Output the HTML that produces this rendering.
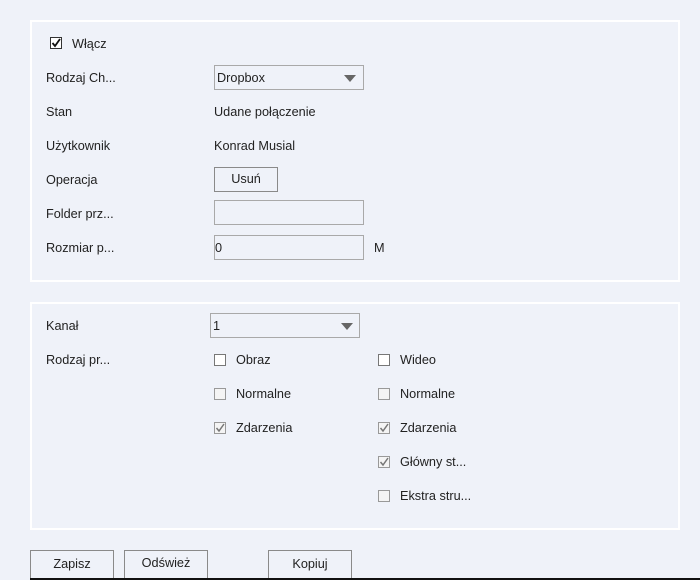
<!DOCTYPE html>
<html><head><style>
body{margin:0;width:700px;height:580px;background:#eff2f9;font-family:"Liberation Sans",sans-serif;font-size:12.7px;color:#222;position:relative;overflow:hidden}
.p{position:absolute;border:2px solid #fff;box-sizing:border-box}
.t{position:absolute;line-height:14px;white-space:nowrap}
.box{position:absolute;border:1px solid #a9a9a9;box-sizing:border-box;background:#eff2f9}
.cb{position:absolute;width:12px;height:12px;border:1px solid #777;box-sizing:border-box;background:#fff}
.cb.g{background:#f4f4f4;border-color:#999}
.arr{position:absolute;width:0;height:0;border-left:6px solid transparent;border-right:6px solid transparent;border-top:7px solid #666}
.btn{position:absolute;border:1px solid #8a8a8a;box-sizing:border-box;text-align:center;line-height:26px;background:#eff2f9}
</style></head><body>
<div class="p" style="left:30px;top:20px;width:650px;height:262px"></div>
<div class="p" style="left:30px;top:302px;width:650px;height:228px"></div>

<div class="cb" style="left:50px;top:37px;border-color:#333"><svg width="10" height="10" style="position:absolute;left:0;top:0"><path d="M1.5 5 L4 8 L9 1" stroke="#111" stroke-width="1.8" fill="none"/></svg></div>
<div class="t" style="left:72px;top:37px">Włącz</div>

<div class="t" style="left:46px;top:71px">Rodzaj Ch...</div>
<div class="box" style="left:214px;top:65px;width:150px;height:25px"></div>
<div class="t" style="left:217px;top:71px">Dropbox</div>
<div class="arr" style="left:344px;top:75px"></div>

<div class="t" style="left:46px;top:105px">Stan</div>
<div class="t" style="left:214px;top:105px">Udane połączenie</div>
<div class="t" style="left:46px;top:139px">Użytkownik</div>
<div class="t" style="left:214px;top:139px">Konrad Musial</div>
<div class="t" style="left:46px;top:173px">Operacja</div>
<div class="btn" style="left:214px;top:167px;width:64px;height:25px;line-height:23px">Usuń</div>
<div class="t" style="left:46px;top:207px">Folder prz...</div>
<div class="box" style="left:214px;top:200px;width:150px;height:25px"></div>
<div class="t" style="left:46px;top:241px">Rozmiar p...</div>
<div class="box" style="left:214px;top:235px;width:150px;height:25px"></div>
<div class="t" style="left:215px;top:241px">0</div>
<div class="t" style="left:374px;top:241px">M</div>

<div class="t" style="left:46px;top:319px">Kanał</div>
<div class="box" style="left:210px;top:313px;width:150px;height:25px"></div>
<div class="t" style="left:213px;top:319px">1</div>
<div class="arr" style="left:341px;top:323px"></div>

<div class="t" style="left:46px;top:353px">Rodzaj pr...</div>
<div class="cb" style="left:214px;top:354px"></div><div class="t" style="left:236px;top:353px">Obraz</div>
<div class="cb" style="left:378px;top:354px"></div><div class="t" style="left:400px;top:353px">Wideo</div>
<div class="cb g" style="left:214px;top:388px"></div><div class="t" style="left:236px;top:387px">Normalne</div>
<div class="cb g" style="left:378px;top:388px"></div><div class="t" style="left:400px;top:387px">Normalne</div>
<div class="cb g" style="left:214px;top:422px"><svg width="10" height="10" style="position:absolute;left:0;top:0"><path d="M1.5 5 L4 8 L9 1" stroke="#777" stroke-width="1.5" fill="none"/></svg></div><div class="t" style="left:236px;top:421px">Zdarzenia</div>
<div class="cb g" style="left:378px;top:422px"><svg width="10" height="10" style="position:absolute;left:0;top:0"><path d="M1.5 5 L4 8 L9 1" stroke="#777" stroke-width="1.5" fill="none"/></svg></div><div class="t" style="left:400px;top:421px">Zdarzenia</div>
<div class="cb g" style="left:378px;top:456px"><svg width="10" height="10" style="position:absolute;left:0;top:0"><path d="M1.5 5 L4 8 L9 1" stroke="#777" stroke-width="1.5" fill="none"/></svg></div><div class="t" style="left:400px;top:455px">Główny st...</div>
<div class="cb g" style="left:378px;top:490px"></div><div class="t" style="left:400px;top:489px">Ekstra stru...</div>

<div class="btn" style="left:30px;top:550px;width:84px;height:30px">Zapisz</div>
<div class="btn" style="left:124px;top:550px;width:84px;height:30px;line-height:24px">Odśwież</div>
<div class="btn" style="left:268px;top:550px;width:84px;height:30px">Kopiuj</div>
<div style="position:absolute;left:30px;top:578px;width:670px;height:2px;background:#111"></div>
</body></html>
